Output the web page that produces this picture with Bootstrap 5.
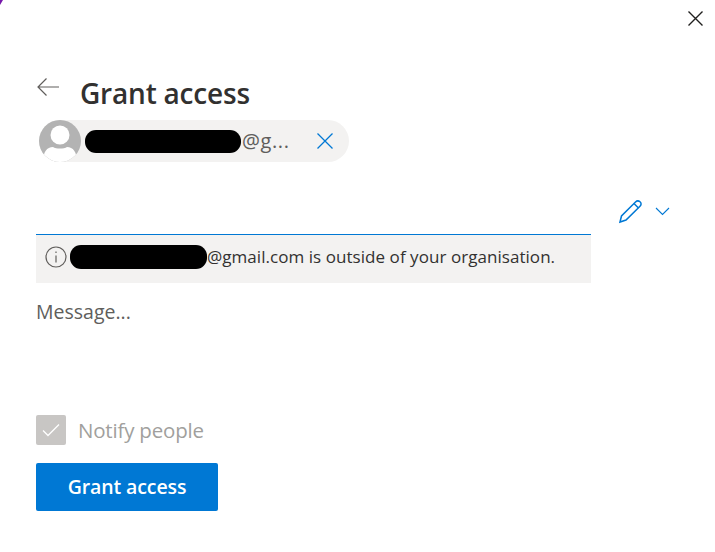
<!DOCTYPE html>
<html lang="en">
<head>
  <meta charset="UTF-8" />
  <meta name="viewport" content="width=device-width, initial-scale=1" />
  <title>Grant access</title>
  <link href="https://cdn.jsdelivr.net/npm/bootstrap@5.3.3/dist/css/bootstrap.min.css" rel="stylesheet" />
  <style>
    body { background: #fff; font-family: "Open Sans", "Noto Sans", sans-serif; color: #323130; width: 715px; height: 552px; overflow: hidden; position: relative; }
    .corner-mark { position: absolute; left: 0; top: 0; width: 0; height: 0; border-top: 5px solid #7719aa; border-right: 3px solid transparent; }
    .close-btn { position: absolute; left: 687px; top: 10px; line-height: 0; }
    .dialog-body { padding: 74px 0 0 36px; width: 555px; box-sizing: content-box; }
    .title-row { height: 39px; }
    .back-icon { margin-top: -16px; width: 24px; }
    .dialog-title { font-size: 28px; font-weight: 600; margin: 0 0 0 20px; line-height: 39px; letter-spacing: -.2px; }
    .person-pill { width: 310px; height: 42px; margin: 7px 0 0 3px; background: #f3f2f1; border-radius: 21px; font-size: 20px; color: #605e5c; }
    .avatar { width: 42px; height: 42px; border-radius: 50%; background: #b3b3b3; overflow: hidden; flex: none; }
    .blob { background: #000; border-radius: 11px; flex: none; }
    .blob-pill { width: 156px; height: 23px; margin-left: 4px; }
    .blob-info { width: 137px; height: 24px; margin-left: 3px; }
    .pill-text { margin-left: 1px; letter-spacing: .6px; }
    .pill-x { margin-left: 26px; line-height: 0; }
    .perm-row { height: 52px; margin-top: 21px; border-bottom: 1px solid #0078d4; position: relative; }
    .perm-tools { position: absolute; left: 582px; top: 15px; width: 60px; }
    .chevron { margin-left: 11px; }
    .info-bar { height: 48px; background: #f3f2f1; font-size: 17px; padding-left: 9px; padding-bottom: 4px; color: #323130; white-space: nowrap; letter-spacing: .05px; }
    .message-box { font-size: 19.5px; color: #605e5c; margin-top: 15px; height: 117px; line-height: 27px; }
    .notify-box { width: 30px; height: 30px; background: #c8c6c4; border-radius: 2px; }
    .notify-label { font-size: 20.5px; color: #a19f9d; margin-left: 12px; letter-spacing: -.2px; }
    .grant-btn { width: 182px; height: 48px; margin-top: 17px; background: #0078d4; border: 0; border-radius: 2px; color: #fff; font-size: 19.5px; font-weight: 600; padding: 0; letter-spacing: -.1px; }
  </style>
</head>
<body>
  <div class="corner-mark"></div>
  <div class="close-btn">
    <svg width="17" height="17" viewBox="0 0 17 17" fill="none" stroke="#201f1e" stroke-width="1.4"><path d="M1.5 1.5l14 14M15.5 1.5l-14 14"/></svg>
  </div>

  <div class="dialog-body">
    <div class="title-row d-flex align-items-center">
      <div class="back-icon">
        <svg width="24" height="20" viewBox="0 0 24 20" fill="none" stroke="#605e5c" stroke-width="1.2"><path d="M23 10H2M10.5 1.5L2 10l8.5 8.5"/></svg>
      </div>
      <h1 class="dialog-title">Grant access</h1>
    </div>

    <div class="person-pill d-flex align-items-center">
      <div class="avatar">
        <svg width="42" height="42" viewBox="0 0 42 42" fill="#fff"><circle cx="21" cy="15" r="9.5"/><path d="M4 42c0-10 4-15 10-15 3 2 11 2 14 0 6 0 10 5 10 15z"/></svg>
      </div>
      <div class="blob blob-pill"></div>
      <span class="pill-text">@g...</span>
      <span class="pill-x">
        <svg width="18" height="18" viewBox="0 0 18 18" fill="none" stroke="#0078d4" stroke-width="1.3"><path d="M1.5 1.5l15 15M16.5 1.5l-15 15"/></svg>
      </span>
    </div>

    <div class="perm-row">
      <div class="perm-tools d-flex align-items-center">
        <svg width="26" height="26" viewBox="0 0 26 26" fill="none" stroke="#0078d4" stroke-width="1.5"><path d="M2 24l1.5-6L17.5 4c1.5-1.5 3-1.5 4.5-.2s1.4 3 0 4.4L8 22z"/><path d="M16 5.5l4.5 4.5"/></svg>
        <svg class="chevron" width="15" height="9" viewBox="0 0 15 9" fill="none" stroke="#0078d4" stroke-width="1.1"><path d="M1 1l6.5 6.5L14 1"/></svg>
      </div>
    </div>

    <div class="info-bar d-flex align-items-center">
      <svg width="22" height="22" viewBox="0 0 22 22" fill="none" stroke="#605e5c" stroke-width="1.2"><circle cx="11" cy="11" r="10"/><path d="M11 9.5v7"/><path d="M11 5.5v1.6"/></svg>
      <div class="blob blob-info"></div>
      <span>@gmail.com is outside of your organisation.</span>
    </div>

    <div class="message-box">Message...</div>

    <div class="d-flex align-items-center">
      <div class="notify-box d-flex align-items-center justify-content-center">
        <svg width="18" height="14" viewBox="0 0 18 14" fill="none" stroke="#fff" stroke-width="1.3"><path d="M1 7.5l5 5L17 1.5"/></svg>
      </div>
      <span class="notify-label">Notify people</span>
    </div>

    <button type="button" class="btn grant-btn d-block">Grant access</button>
  </div>

  <script src="https://cdn.jsdelivr.net/npm/bootstrap@5.3.3/dist/js/bootstrap.bundle.min.js"></script>
</body>
</html>
